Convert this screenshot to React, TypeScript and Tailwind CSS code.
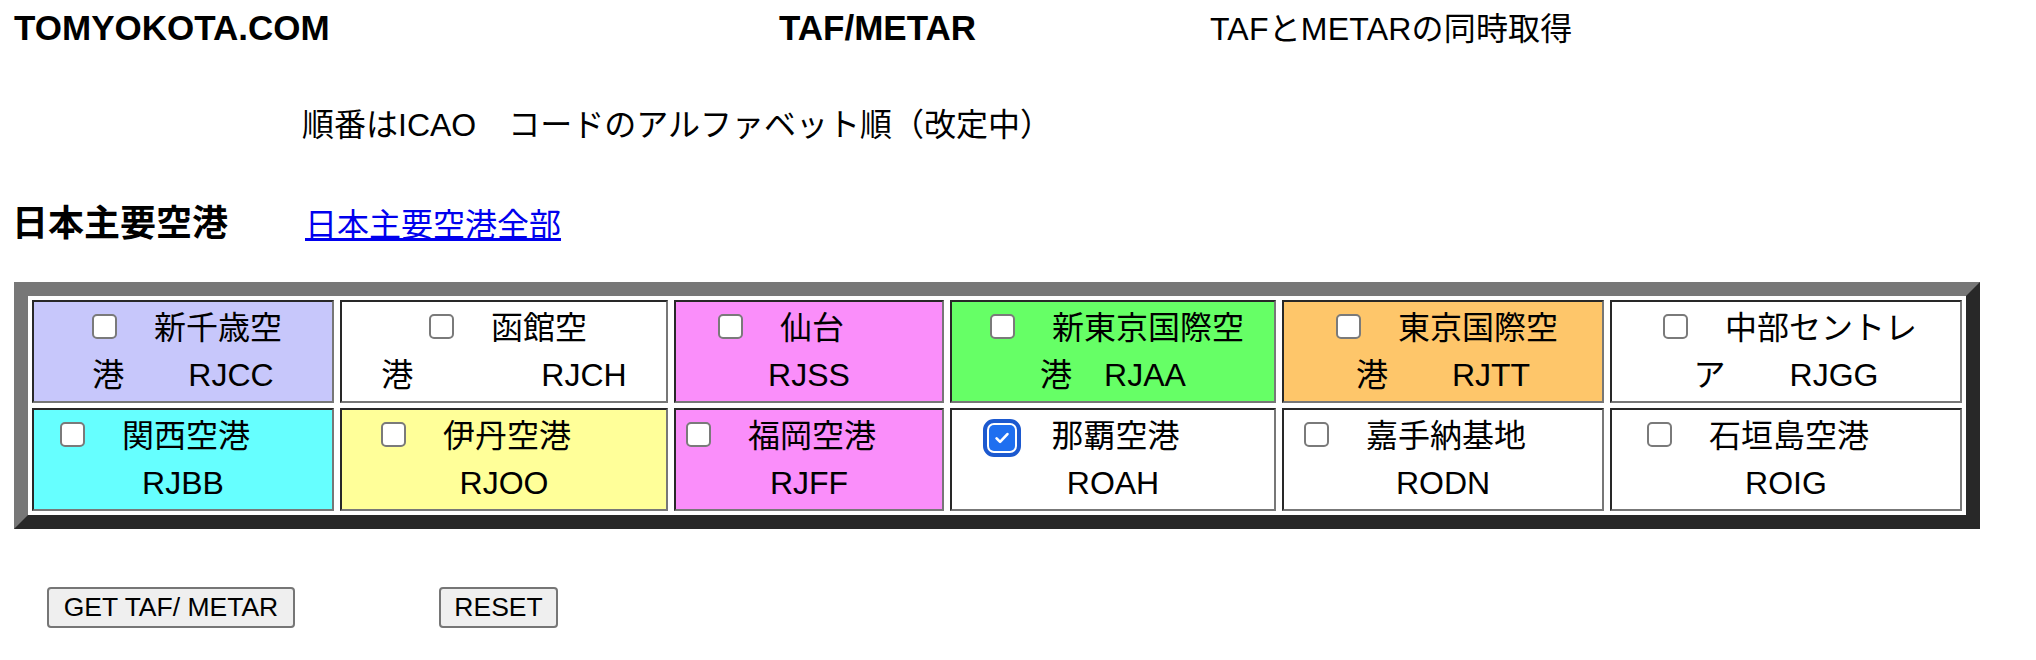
type Airport = {
  top: string;
  bottom: string;
  bg: string;
  checked?: boolean;
};

const rowOne: Airport[] = [
  { top: "　新千歳空", bottom: "港　　RJCC", bg: "bg-[#c7c7fb]" },
  { top: "　函館空", bottom: "港　　　　RJCH", bg: "bg-white" },
  { top: "　仙台　　", bottom: "RJSS", bg: "bg-[#fa8efa]" },
  { top: "　新東京国際空", bottom: "港　RJAA", bg: "bg-[#66ff66]" },
  { top: "　東京国際空", bottom: "港　　RJTT", bg: "bg-[#fec66a]" },
  { top: "　中部セントレ", bottom: "ア　　RJGG", bg: "bg-white" },
];

const rowTwo: Airport[] = [
  { top: "　関西空港　　", bottom: "RJBB", bg: "bg-[#66ffff]" },
  { top: "　伊丹空港　　", bottom: "RJOO", bg: "bg-[#ffff99]" },
  { top: "　福岡空港　　", bottom: "RJFF", bg: "bg-[#fa8efa]" },
  { top: "　那覇空港　　", bottom: "ROAH", bg: "bg-white", checked: true },
  { top: "　嘉手納基地　　", bottom: "RODN", bg: "bg-white" },
  { top: "　石垣島空港　　", bottom: "ROIG", bg: "bg-white" },
];

const Box = ({ checked }: { checked?: boolean }) => {
  if (checked) {
    return (
      <span className="inline-flex items-center justify-center w-[26px] h-[26px] ml-[7px] mr-[4px] align-[-1px] rounded-[5px] bg-[#1f6ff0] outline-[4px] outline-solid outline-[#1c59cf] outline-offset-[2px]">
        <svg viewBox="0 0 24 24" className="w-[20px] h-[20px]">
          <path
            d="M5.5 12.5l4.2 4.2 8.8-9.4"
            fill="none"
            stroke="white"
            strokeWidth="3.2"
            strokeLinecap="round"
            strokeLinejoin="round"
          />
        </svg>
      </span>
    );
  }
  return (
    <span className="inline-block w-[25px] h-[25px] ml-[8px] mr-[5px] align-baseline rounded-[5px] border-2 border-[#7a7a7a] bg-white" />
  );
};

const Cell = ({ a }: { a: Airport }) => (
  <div
    className={`h-[103px] flex flex-col justify-center items-center border-2 border-t-[#282828] border-l-[#282828] border-b-[#777777] border-r-[#777777] ${a.bg}`}
  >
    <div className="leading-[47px] whitespace-pre">
      <Box checked={a.checked} />
      {a.top}
    </div>
    <div className="leading-[47px] whitespace-pre">{a.bottom}</div>
  </div>
);

const App = () => {
  return (
    <div className="w-full min-h-[660px] bg-white text-black text-[32px] font-['Liberation_Sans','Noto_Sans_CJK_JP',sans-serif]">
      {/* Title row */}
      <div className="flex items-baseline pt-[4px] pl-[14px] leading-[48px]">
        <div className="w-[765px] text-[35px] font-bold">TOMYOKOTA.COM</div>
        <div className="w-[431px] text-[35px] font-bold">TAF/METAR</div>
        <div className="tracking-[0.2px]">TAFとMETARの同時取得</div>
      </div>

      <div className="mt-[48px] pl-[302px] leading-[48px]">
        順番はICAO　コードのアルファベット順（改定中）
      </div>

      <div className="mt-[51px] flex items-baseline pl-[12px] leading-[48px]">
        <div className="w-[293px] text-[36px] font-bold">日本主要空港</div>
        <a href="#" className="text-[#0000ee] underline">
          日本主要空港全部
        </a>
      </div>

      {/* Airport table */}
      <div className="mt-[33px] ml-[14px] w-[1966px] border-[14px] border-t-[#777777] border-l-[#777777] border-r-[#282828] border-b-[#282828] bg-white p-[4px]">
        <div className="grid grid-cols-[302px_328px_270px_326px_322px_352px] gap-x-[6px] gap-y-[5px]">
          {rowOne.map((a, i) => (
            <Cell key={"a" + i} a={a} />
          ))}
          {rowTwo.map((a, i) => (
            <Cell key={"b" + i} a={a} />
          ))}
        </div>
      </div>

      <div className="mt-[58px] ml-[47px] flex gap-[144px]">
        <button className="w-[248px] h-[41px] text-[26.5px] leading-[37px] bg-[#efefef] border-2 border-[#767676] rounded-[4px]">
          GET TAF/ METAR
        </button>
        <button className="w-[119px] h-[41px] text-[26.5px] leading-[37px] bg-[#efefef] border-2 border-[#767676] rounded-[4px]">
          RESET
        </button>
      </div>
    </div>
  );
};

export default App;
